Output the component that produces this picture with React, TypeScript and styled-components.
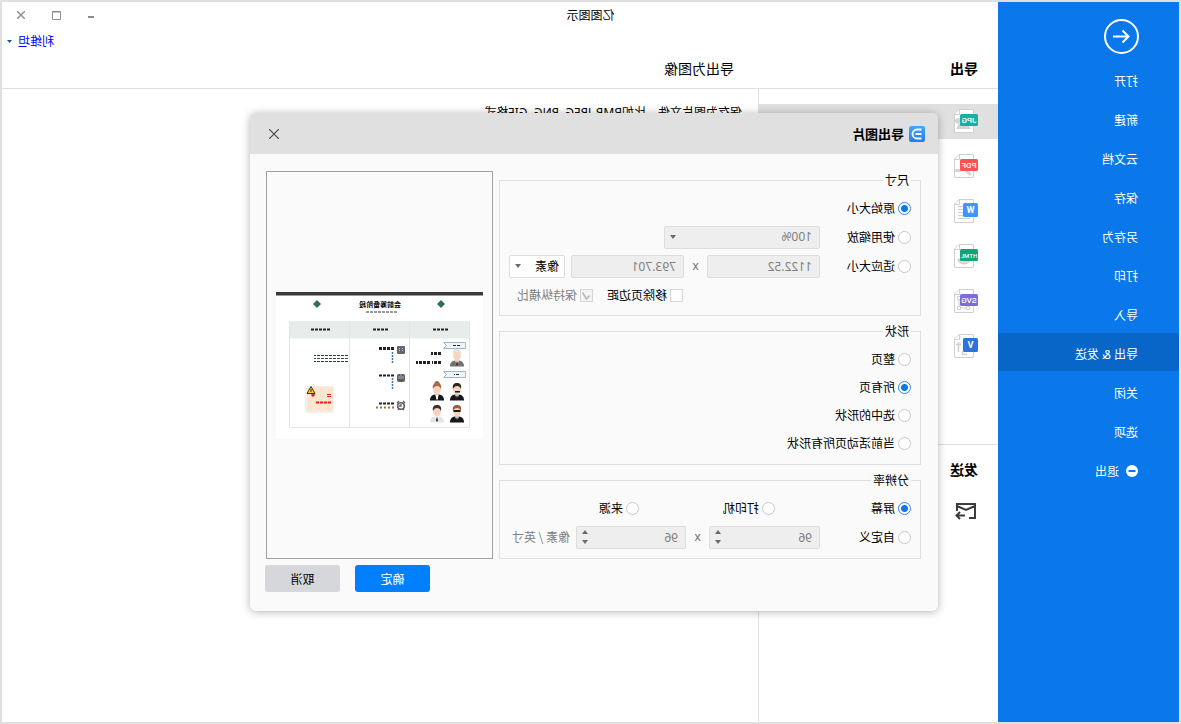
import React from "react";
import styled, { createGlobalStyle, css } from "styled-components";

const GlobalStyle = createGlobalStyle`
  *, *::before, *::after { box-sizing: border-box; }
  body {
    margin: 0;
    background: #fff;
    font-family: "Noto Sans CJK SC", "Noto Sans", sans-serif;
    font-size: 12px;
    line-height: 16px;
    color: #000;
  }
  button, input, select { font: inherit; color: inherit; }
  button { border: 0; padding: 0; background: none; cursor: pointer; }
  ul { list-style: none; margin: 0; padding: 0; }
  h1, h2, p { margin: 0; font-weight: 400; }
  svg { display: block; }
`;

/* The window is shown in mirror image, so it is built normally and flipped once here. */
const Window = styled.div`
  position: relative;
  display: flex;
  min-height: 100vh;
  border: 2px solid #e0e0e0;
  background: #fff;
  transform: scaleX(-1);
  overflow: hidden;
`;

const Sidebar = styled.nav`
  flex: 0 0 181px;
  padding-top: 17px;
  background: #0a77eb;
  color: #fff;
`;

const BackButton = styled.button`
  display: block;
  margin: 0 0 6px 40px;
`;

const Menu = styled.ul`
  display: flex;
  flex-direction: column;
  gap: 1px;
  font-family: "Noto Sans", "Noto Sans CJK SC", sans-serif;
`;

const MenuItem = styled.button<{ $active?: boolean }>`
  display: flex;
  align-items: center;
  gap: 7px;
  width: 100%;
  height: 38px;
  padding: 6px 0 0 41px;
  background: ${(p) => (p.$active ? "#0766c8" : "transparent")};
  svg { margin-bottom: 2px; }
`;

const Content = styled.div`
  flex: 1;
  min-width: 0;
  display: flex;
  flex-direction: column;
`;

const Header = styled.header`
  height: 87px;
  border-bottom: 1px solid #e0e0e0;
`;

const TitleBar = styled.div`
  display: grid;
  grid-template-columns: 1fr auto 1fr 181px;
  align-items: center;
  height: 26px;
`;

const WindowControls = styled.div`
  grid-column: 4;
  display: flex;
  justify-content: flex-end;
  padding-right: 2px;
`;

const ControlButton = styled.button`
  display: flex;
  align-items: center;
  justify-content: center;
  width: 35px;
  height: 24px;
`;

const AppTitle = styled.h1`
  grid-column: 2;
  font-size: 12px;
`;

const UserRow = styled.div`
  display: flex;
  justify-content: flex-end;
  height: 26px;
  padding-right: 5px;
`;

const UserLink = styled.a`
  display: flex;
  align-items: center;
  gap: 6px;
  color: #0000ff;
  text-decoration: none;
`;

const Headings = styled.div`
  display: flex;
  font-size: 14px;
  line-height: 28px;
`;

const ColumnHeading = styled.h2`
  flex: 0 0 244px;
  padding-left: 20px;
  font-size: 14px;
  font-weight: 700;
`;

const PageHeading = styled.h2`
  padding-left: 20px;
  font-size: 14px;
`;

const Body = styled.div`
  flex: 1;
  display: flex;
`;

const ExportColumn = styled.aside`
  flex: 0 0 240px;
  border-right: 1px solid #e0e0e0;
  padding-top: 15px;
`;

const FormatList = styled.ul`
  display: flex;
  flex-direction: column;
  gap: 10px;
  padding-bottom: 80px;
  border-bottom: 1px solid #e0e0e0;
`;

const FormatButton = styled.button<{ $active?: boolean }>`
  display: flex;
  align-items: flex-start;
  width: 100%;
  height: 35px;
  padding: 5px 0 0 20px;
  background: ${(p) => (p.$active ? "#e0e0e0" : "transparent")};
`;

const SendHeading = styled.h2`
  padding: 14px 0 0 20px;
  font-size: 14px;
  line-height: 20px;
  font-weight: 700;
`;

const SendButton = styled.button`
  display: block;
  margin: 23px 0 0 21px;
`;

const Description = styled.p`
  padding: 16px 0 0 16px;
  font-family: "Noto Sans", "Noto Sans CJK SC", sans-serif;
`;

const Dialog = styled.section`
  position: absolute;
  left: 241px;
  top: 111px;
  width: 688px;
  border-radius: 6px;
  background: #fafafa;
  box-shadow: 0 1px 8px rgba(0, 0, 0, 0.3);
  overflow: hidden;
`;

const DialogHeader = styled.header`
  display: flex;
  align-items: center;
  gap: 5px;
  height: 41px;
  padding: 0 19px 0 13px;
  background: #e0e0e0;
`;

const DialogTitle = styled.h2`
  flex: 1;
  font-size: 13px;
  font-weight: 700;
`;

const DialogBody = styled.div`
  display: flex;
  gap: 6px;
  padding: 17px 16px 0 17px;
`;

const Groups = styled.form`
  flex: 1;
  display: flex;
  flex-direction: column;
  gap: 6px;
`;

const Group = styled.fieldset<{ $bottom?: number }>`
  margin: 0;
  min-width: 0;
  border: 1px solid #dfdfdf;
  padding: 5px 9px ${(p) => p.$bottom ?? 7}px;
`;

const Legend = styled.legend`
  padding: 0 2px;
  line-height: 18px;
`;

const Rows = styled.div<{ $gap?: number }>`
  display: flex;
  flex-direction: column;
  gap: ${(p) => p.$gap ?? 0}px;
`;

const Row = styled.div`
  display: flex;
  align-items: center;
  height: 28px;
`;

const Choice = styled.label<{ $width?: number; $muted?: boolean }>`
  display: flex;
  align-items: center;
  gap: 3px;
  width: ${(p) => (p.$width ? `${p.$width}px` : "auto")};
  color: ${(p) => (p.$muted ? "#808080" : "#000")};
  white-space: nowrap;
`;

const Radio = styled.input.attrs({ type: "radio" })`
  appearance: none;
  flex: none;
  width: 13px;
  height: 13px;
  margin: 0;
  border: 1px solid #c8c8c8;
  border-radius: 50%;
  background: #fff;
  &:checked {
    border-color: #2b87ee;
    background: radial-gradient(circle, #0a77eb 0 3px, #fff 4px);
  }
`;

const CheckInput = styled.input.attrs({ type: "checkbox" })`
  appearance: none;
  display: block;
  width: 13px;
  height: 13px;
  margin: 0;
  border: 1px solid #d6d6d6;
  background: #fff;
  &:disabled { background: #f4f4f4; }
`;

const CheckBox = styled.span`
  position: relative;
  svg { position: absolute; left: 3px; top: 3px; pointer-events: none; }
`;

const Checks = styled(Row)`
  padding-left: 228px;
  gap: 14px;
`;

const fieldLook = css<{ $enabled?: boolean }>`
  width: 100%;
  height: 23px;
  border: 1px solid #dcdcdc;
  border-radius: 2px;
  background: ${(p) => (p.$enabled ? "#fff" : "#eeeeee")};
  color: ${(p) => (p.$enabled ? "#000" : "#808080")};
  appearance: none;
  padding: 0 7px;
  outline: none;
  font-family: "Noto Sans", "Noto Sans CJK SC", sans-serif;
`;

const Field = styled.span<{ $width: number }>`
  position: relative;
  flex: none;
  width: ${(p) => p.$width}px;
`;

const UnitField = styled(Field)`
  margin-left: 6px;
`;

const TextInput = styled.input`
  ${fieldLook}
  display: block;
  &::-webkit-inner-spin-button { appearance: none; margin: 0; }
`;

const SelectInput = styled.select`
  ${fieldLook}
  display: block;
`;

const UnitSelect = styled(SelectInput)`
  padding: 0 5px;
  font-family: "Noto Sans CJK SC", sans-serif;
`;

const ArrowMark = styled.span`
  position: absolute;
  right: 6px;
  top: 9px;
  pointer-events: none;
`;

const Steps = styled.span`
  position: absolute;
  right: 3px;
  top: 2px;
  bottom: 2px;
  display: flex;
  flex-direction: column;
`;

const StepButton = styled.button`
  flex: 1;
  display: flex;
  align-items: center;
  justify-content: center;
  width: 12px;
`;

const Times = styled.span`
  flex: 1;
  text-align: center;
  color: #707070;
  font-family: "Noto Sans", sans-serif;
`;

const UnitText = styled.span`
  flex: none;
  width: 67px;
  padding-left: 6px;
  color: #808080;
  white-space: nowrap;
`;

const Preview = styled.div`
  display: flex;
  align-items: center;
  justify-content: center;
  flex: 0 0 227px;
  border: 1px solid #a0a0a0;
`;

const DialogFooter = styled.footer`
  display: flex;
  justify-content: flex-end;
  gap: 15px;
  padding: 6px 15px 19px;
`;

const ActionButton = styled.button<{ $primary?: boolean }>`
  width: 75px;
  height: 27px;
  border-radius: 3px;
  background: ${(p) => (p.$primary ? "#007fff" : "#d5d7db")};
  color: ${(p) => (p.$primary ? "#fff" : "#000")};
`;

const menuItems = ["打开", "新建", "云文档", "保存", "另存为", "打印", "导入", "导出 & 发送", "关闭", "选项"];

type Format = { name: string; color: string; small?: boolean; art: React.ReactNode };

const formats: Format[] = [
  {
    name: "JPG",
    color: "#15b2a0",
    art: <path d="M7 20l4-6h8l3 6z M20 9a3 3 0 1 0 .1 0z" fill="#d4d4d4" />,
  },
  {
    name: "PDF",
    color: "#ff5052",
    art: <path d="M8 20c2-1 3-2 4-4M18 16.500h4" fill="none" stroke="#d4d4d4" strokeWidth="3" strokeLinecap="round" />,
  },
  {
    name: "W",
    color: "#3d97fb",
    small: true,
    art: <path d="M7 7.500h13M7 10.500h13M7 13.500h13M7 16.500h13M8 19.500h12" stroke="#d0d0d0" />,
  },
  {
    name: "HTML",
    color: "#10a574",
    art: <path d="M8 15a6 5 0 0 0 12 0z" fill="#dadada" stroke="#c8c8c8" />,
  },
  {
    name: "SVG",
    color: "#7d6be0",
    art: (
      <path
        d="M8.500 7.500h3v3h-3zM17.500 7.500h3v3h-3zM8.500 17.500h3v3h-3zM17.500 17.500h3v3h-3zM11.500 19h6M19 10v7"
        fill="none"
        stroke="#d0d0d0"
      />
    ),
  },
  {
    name: "V",
    color: "#2b74d9",
    small: true,
    art: <path d="M19.500 8v10M17 10.500h5M11 20.500h5M15.500 17v3" fill="none" stroke="#d0d0d0" strokeWidth="1.500" />,
  },
];

function FormatIcon({ format }: { format: Format }) {
  const { name, color, small, art } = format;
  const width = small ? 15 : 18;
  const height = small ? 14 : 12;
  const top = small ? 4 : 5;
  return (
    <svg width="25" height="24" viewBox="0 0 25 24" aria-hidden="true">
      <path d="M4.500.5h14.500l4.500 4.500v18.500h-19z" fill="#fff" stroke="#d0d0d0" />
      <path d="M18.500 .5v5h5" fill="none" stroke="#d0d0d0" />
      {art}
      <rect x="0" y={top} width={width} height={height} rx="1.500" fill={color} />
      <text
        x={width / 2}
        y={top + height / 2 + 3}
        fontSize={small ? 9 : name.length > 3 ? 6 : 8}
        fontWeight={small ? 700 : 500}
        textAnchor="middle"
        fill="#fff"
        fontFamily="Roboto, sans-serif"
      >
        {name}
      </text>
    </svg>
  );
}

function DownArrow() {
  return (
    <svg width="6" height="4" viewBox="0 0 6 4" aria-hidden="true">
      <path d="M0 0h6L3 4z" fill="#6a6a6a" />
    </svg>
  );
}

function Spin({ width, label }: { width: number; label: string }) {
  return (
    <Field $width={width}>
      <TextInput type="number" aria-label={label} defaultValue={96} />
      <Steps>
        <StepButton type="button" aria-label="增加">
          <svg width="6" height="4" viewBox="0 0 6 4"><path d="M0 4h6L3 0z" fill="#6a6a6a" /></svg>
        </StepButton>
        <StepButton type="button" aria-label="减少"><DownArrow /></StepButton>
      </Steps>
    </Field>
  );
}

type PersonProps = { x: number; y: number; hair: string; suit: string; shirt: string; tie: string };

function Person({ x, y, hair, suit, shirt, tie }: PersonProps) {
  return (
    <g transform={`translate(${x} ${y})`}>
      <path d="M0 17.500c0-4 2-5.500 5-6h4c3 .5 5 2 5 6z" fill={suit} />
      <path d="M5 11.500h4l-2 5z" fill={shirt} />
      <path d="M6.500 12.500h1l.5 3-1 1.500-1-1.500z" fill={tie} />
      <ellipse cx="7" cy="6.500" rx="3.800" ry="5" fill="#f8d3bd" />
      <path d="M3 6C2 1 4.500 0 7 0s5 1 4 6c-1-2-2-3-4-3s-3 1-4 3z" fill={hair} />
    </g>
  );
}

type DashesProps = { x: number; y: number; width: number; color?: string; dash?: string; weight?: number };

function Dashes({ x, y, width, color = "#222", dash = "3 1", weight = 2 }: DashesProps) {
  return <path d={`M${x} ${y}h${width}`} stroke={color} strokeWidth={weight} strokeDasharray={dash} />;
}

function Poster() {
  return (
    <svg width="207" height="147" viewBox="0 0 207 147" role="img" aria-label="导出预览">
      <rect width="207" height="147" fill="#fff" />
      <rect width="207" height="3.500" fill="#3a3a3a" />
      <path d="M42 8l4 4-4 4-4-4zM166 8l4 4-4 4-4-4z" fill="#2f6e5d" />
      <text x="103" y="15" fontSize="7" fontWeight="700" textAnchor="middle">会前筹备阶段</text>
      <Dashes x={86} y={20} width={31} color="#333" weight={1} dash="3 1" />
      <rect x="13" y="29" width="181" height="17.500" fill="#e6edea" />
      <path d="M13.500 29v106.500h180V29M73.500 29v106M133.500 29v106" fill="none" stroke="#e2e6e4" />
      <Dashes x={35} y={37.500} width={16} />
      <Dashes x={95} y={37.500} width={16} />
      <Dashes x={153} y={37.500} width={20} />

      <path d="M17.500 50.500h22l-3 3 3 3h-22zM17.500 79.500h22l-3 3 3 3h-22z" fill="#eef6fb" stroke="#9fb8c6" />
      <Dashes x={23} y={53.500} width={8} weight={1} />
      <Dashes x={24} y={82.500} width={5} weight={1} />
      <Person x={19} y={57} hair="#e4e4e4" suit="#77706c" shirt="#fff" tie="#333" />
      <Dashes x={42} y={61.500} width={10} weight={3} />
      <Dashes x={42} y={70.500} width={9} weight={3} />
      <Dashes x={53} y={70.500} width={14} weight={3} />
      <circle cx="46" cy="91.500" r="2.500" fill="#a8694a" />
      <Person x={19} y={91} hair="#2e2420" suit="#161616" shirt="#fff" tie="#161616" />
      <Person x={39} y={91} hair="#a8694a" suit="#161616" shirt="#fff" tie="#fff" />
      <Person x={19} y={113} hair="#9a5a3c" suit="#161616" shirt="#fff" tie="#161616" />
      <Person x={39} y={113} hair="#3a302c" suit="#e2e4e8" shirt="#fff" tie="#333" />
      <path d="M22.500 118h7v2h-7zM23 99h5v1.500h-5z" fill="#1a1a1a" />

      <rect x="78" y="54" width="8" height="8" rx="1" fill="#626672" />
      <path d="M80.500 56v4M83.500 56v4" stroke="#c8cad0" strokeDasharray="1 1" />
      <rect x="78" y="82" width="8" height="8" rx="2" fill="#5a5d66" />
      <path d="M80 84v3M82 81v6M84 84v3" stroke="#d0d2d6" strokeWidth=".7" />
      <circle cx="82" cy="114" r="3.300" fill="#fff" stroke="#5a5d66" strokeWidth="1.600" />
      <path d="M78 111l2-2M86 111l-2-2M79 118l1-1M85 118l-1-1M82 112v2h2" fill="none" stroke="#5a5d66" strokeWidth="1.300" />
      <Dashes x={89} y={56.500} width={15} weight={3} />
      <Dashes x={89} y={83.500} width={15} />
      <Dashes x={89} y={111.500} width={15} />
      <path d="M90.500 60v12M90.500 86v12" stroke="#3f74b0" strokeWidth="1.500" strokeDasharray="2 1" />
      <Dashes x={89} y={115.500} width={19} color="#9a7347" dash="2 2" />

      <Dashes x={135} y={63.500} width={34} color="#1f3f5c" weight={1} />
      <Dashes x={135} y={66.500} width={34} color="#5a4330" weight={1} />
      <Dashes x={135} y={69.500} width={34} color="#1f3f5c" weight={1} />

      <rect x="149" y="94" width="29" height="27" rx="2" fill="#f3f0ee" />
      <rect x="150" y="94.500" width="26" height="25" rx="1" fill="#fde6cf" />
      <Dashes x={152} y={102.500} width={4} color="#f01818" weight={1} dash="4" />
      <Dashes x={152} y={104.500} width={4} color="#f01818" weight={1} dash="4" />
      <Dashes x={152} y={110.500} width={15} color="#f01818" />
      <circle cx="170" cy="103" r="1.800" fill="#f01818" />
      <path d="M172 94.500l4 7h-8z" fill="#f3cf2c" stroke="#3a3420" strokeLinejoin="round" />
      <path d="M172 97v3" stroke="#3a3420" />
    </svg>
  );
}

export default function App() {
  return (
    <>
      <GlobalStyle />
      <Window>
        <Sidebar>
          <BackButton aria-label="返回">
            <svg width="35" height="35" viewBox="0 0 35 35" fill="none" stroke="#fff" strokeWidth="2">
              <circle cx="17.500" cy="17.500" r="16.500" />
              <path d="M26 17.500H10.500M16.500 11.500l-6 6 6 6" />
            </svg>
          </BackButton>
          <Menu>
            {menuItems.map((item) => (
              <li key={item}>
                <MenuItem $active={item === "导出 & 发送"}>{item}</MenuItem>
              </li>
            ))}
            <li>
              <MenuItem>
                <svg width="12" height="12" viewBox="0 0 12 12" aria-hidden="true">
                  <circle cx="6" cy="6" r="6" fill="#fff" />
                  <path d="M2.500 6h7" stroke="#0a77eb" strokeWidth="2" />
                </svg>
                退出
              </MenuItem>
            </li>
          </Menu>
        </Sidebar>

        <Content>
          <Header>
            <TitleBar>
              <AppTitle>亿图图示</AppTitle>
              <WindowControls>
                <ControlButton aria-label="最小化">
                  <svg width="6" height="6" viewBox="0 0 6 6"><path d="M0 5h6" stroke="#8c8c8c" strokeWidth="2" /></svg>
                </ControlButton>
                <ControlButton aria-label="最大化">
                  <svg width="9" height="9" viewBox="0 0 9 9">
                    <path d="M.5.500h8v8h-8zM0 1h9" fill="none" stroke="#8c8c8c" />
                  </svg>
                </ControlButton>
                <ControlButton aria-label="关闭窗口">
                  <svg width="8" height="8" viewBox="0 0 8 8"><path d="M0 0l8 8M8 0L0 8" stroke="#8c8c8c" strokeWidth="1.400" /></svg>
                </ControlButton>
              </WindowControls>
            </TitleBar>
            <UserRow>
              <UserLink href="#user">
                利维坦
                <svg width="5" height="3" viewBox="0 0 5 3" aria-hidden="true"><path d="M0 0h5L2.500 3z" fill="#0a57a8" /></svg>
              </UserLink>
            </UserRow>
            <Headings>
              <ColumnHeading>导出</ColumnHeading>
              <PageHeading>导出为图像</PageHeading>
            </Headings>
          </Header>

          <Body>
            <ExportColumn>
              <FormatList>
                {formats.map((format) => (
                  <li key={format.name}>
                    <FormatButton $active={format.name === "JPG"} aria-label={format.name}>
                      <FormatIcon format={format} />
                    </FormatButton>
                  </li>
                ))}
              </FormatList>
              <SendHeading>发送</SendHeading>
              <SendButton aria-label="发送邮件">
                <svg width="22" height="18" viewBox="0 0 22 18" fill="none" stroke="#3c3c3c" strokeWidth="2">
                  <path d="M8 16H2V2h18v7M2 4l9 4 9-4" />
                  <path d="M12 13.500h8M17 10l3.500 3.500L17 17" />
                </svg>
              </SendButton>
            </ExportColumn>
            <Description>保存为图片文件，比如BMP, JPEG, PNG, GIF格式</Description>
          </Body>
        </Content>

        <Dialog role="dialog" aria-labelledby="dialog-title">
          <DialogHeader>
            <svg width="16" height="16" viewBox="0 0 16 16" aria-hidden="true">
              <defs>
                <linearGradient id="logo-fill" x1="0" y1="0" x2="0" y2="1">
                  <stop offset="0" stopColor="#45a6ff" />
                  <stop offset="1" stopColor="#1f7cf5" />
                </linearGradient>
              </defs>
              <rect width="16" height="16" rx="2.500" fill="url(#logo-fill)" />
              <path d="M3.500 3.500H8a4.500 4.500 0 0 1 0 9H3.500M3.500 8h6" fill="none" stroke="#fff" strokeWidth="1.800" />
            </svg>
            <DialogTitle id="dialog-title">导出图片</DialogTitle>
            <button aria-label="关闭">
              <svg width="10" height="10" viewBox="0 0 10 10"><path d="M0 0l10 10M10 0L0 10" stroke="#4a4a4a" strokeWidth="1.200" /></svg>
            </button>
          </DialogHeader>

          <DialogBody>
            <Groups>
              <Group $bottom={6}>
                <Legend>尺寸</Legend>
                <Rows $gap={1}>
                  <Row>
                    <Choice><Radio name="size" defaultChecked />原始大小</Choice>
                  </Row>
                  <Row>
                    <Choice $width={91}><Radio name="size" />使用缩放</Choice>
                    <Field $width={156}>
                      <SelectInput aria-label="缩放比例"><option>100%</option></SelectInput>
                      <ArrowMark><DownArrow /></ArrowMark>
                    </Field>
                  </Row>
                  <Row>
                    <Choice $width={91}><Radio name="size" />适应大小</Choice>
                    <Field $width={113}><TextInput aria-label="宽度" defaultValue="1122.52" /></Field>
                    <Times>x</Times>
                    <Field $width={113}><TextInput aria-label="高度" defaultValue="793.701" /></Field>
                    <UnitField $width={56}>
                      <UnitSelect $enabled aria-label="单位"><option>像素</option></UnitSelect>
                      <ArrowMark><DownArrow /></ArrowMark>
                    </UnitField>
                  </Row>
                  <Checks>
                    <Choice>
                      <CheckInput />移除页边距
                    </Choice>
                    <Choice $muted>
                      <CheckBox>
                        <CheckInput defaultChecked disabled />
                        <svg width="8" height="8" viewBox="0 0 8 8" aria-hidden="true">
                          <path d="M.5 3.500l3 3.500 4-6.500" fill="none" stroke="#b8b8b8" strokeWidth="1.600" />
                        </svg>
                      </CheckBox>
                      保持纵横比
                    </Choice>
                  </Checks>
                </Rows>
              </Group>

              <Group>
                <Legend>形状</Legend>
                <Rows>
                  <Row><Choice><Radio name="shape" />整页</Choice></Row>
                  <Row><Choice><Radio name="shape" defaultChecked />所有页</Choice></Row>
                  <Row><Choice><Radio name="shape" />选中的形状</Choice></Row>
                  <Row><Choice><Radio name="shape" />当前活动页所有形状</Choice></Row>
                </Rows>
              </Group>

              <Group>
                <Legend>分辨率</Legend>
                <Rows $gap={1}>
                  <Row>
                    <Choice $width={136}><Radio name="dpi" defaultChecked />屏幕</Choice>
                    <Choice $width={136}><Radio name="dpi" />打印机</Choice>
                    <Choice><Radio name="dpi" />来源</Choice>
                  </Row>
                  <Row>
                    <Choice $width={91}><Radio name="dpi" />自定义</Choice>
                    <Spin width={111} label="水平分辨率" />
                    <Times>x</Times>
                    <Spin width={110} label="垂直分辨率" />
                    <UnitText>像素 / 英寸</UnitText>
                  </Row>
                </Rows>
              </Group>
            </Groups>
            <Preview><Poster /></Preview>
          </DialogBody>

          <DialogFooter>
            <ActionButton $primary>确定</ActionButton>
            <ActionButton>取消</ActionButton>
          </DialogFooter>
        </Dialog>
      </Window>
    </>
  );
}
